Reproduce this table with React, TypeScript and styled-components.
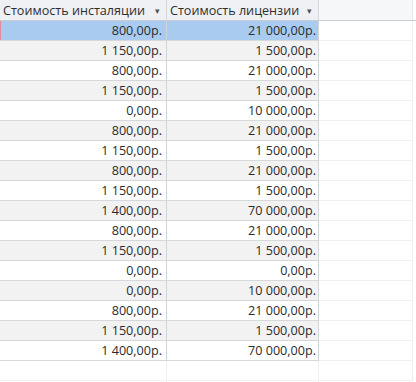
import React from "react";
import styled, { createGlobalStyle } from "styled-components";

type Row = {
  install: string;
  license: string;
};

const rows: Row[] = [
  { install: "800,00р.", license: "21 000,00р." },
  { install: "1 150,00р.", license: "1 500,00р." },
  { install: "800,00р.", license: "21 000,00р." },
  { install: "1 150,00р.", license: "1 500,00р." },
  { install: "0,00р.", license: "10 000,00р." },
  { install: "800,00р.", license: "21 000,00р." },
  { install: "1 150,00р.", license: "1 500,00р." },
  { install: "800,00р.", license: "21 000,00р." },
  { install: "1 150,00р.", license: "1 500,00р." },
  { install: "1 400,00р.", license: "70 000,00р." },
  { install: "800,00р.", license: "21 000,00р." },
  { install: "1 150,00р.", license: "1 500,00р." },
  { install: "0,00р.", license: "0,00р." },
  { install: "0,00р.", license: "10 000,00р." },
  { install: "800,00р.", license: "21 000,00р." },
  { install: "1 150,00р.", license: "1 500,00р." },
  { install: "1 400,00р.", license: "70 000,00р." },
];

const App: React.FC = () => {
  return (
    <>
      <GlobalStyle />
      <Sheet>
        <HeaderRow>
          <HeaderCell>
            Стоимость инсталяции <Arrow>▾</Arrow>
          </HeaderCell>
          <HeaderCell>
            Стоимость лицензии <Arrow>▾</Arrow>
          </HeaderCell>
          <BlankHeader />
        </HeaderRow>
        {rows.map((r, i) => (
          <DataRow key={i}>
            <Cell $selected={i === 0} $shaded={i % 2 === 1} $first>
              {r.install}
            </Cell>
            <Cell $selected={i === 0} $shaded={i % 2 === 1}>
              {r.license}
            </Cell>
            <BlankCell />
          </DataRow>
        ))}
        <DataRow>
          <BlankCell />
          <BlankCell />
          <BlankCell />
        </DataRow>
      </Sheet>
    </>
  );
};

export default App;

const GlobalStyle = createGlobalStyle`
  body {
    margin: 0;
    background: #fff;
    font-family: "Open Sans", "Noto Sans", sans-serif;
    overflow: hidden;
  }
`;

const Sheet = styled.div`
  display: flex;
  flex-direction: column;
  width: 416px;
  height: 382px;
  overflow: hidden;
`;

const HeaderRow = styled.div`
  display: grid;
  grid-template-columns: 167px 152px 94px;
  height: 20px;
  border-bottom: 1px solid #c8cdd4;
`;

const HeaderCell = styled.div`
  display: flex;
  align-items: center;
  justify-content: space-between;
  padding: 0 6px 0 3px;
  background: #eef0f3;
  border-right: 1px solid #d4d8de;
  font-size: 12.6px;
  color: #2e2e2e;
  white-space: nowrap;
`;

const Arrow = styled.span`
  font-size: 9px;
  color: #555;
`;

const BlankHeader = styled.div`
  background: #f6f7f9;
  border-right: 1px solid #e6e8eb;
`;

const DataRow = styled.div`
  display: grid;
  grid-template-columns: 167px 152px 94px;
  height: 20px;
`;

const Cell = styled.div<{ $selected?: boolean; $shaded?: boolean; $first?: boolean }>`
  display: flex;
  align-items: center;
  justify-content: flex-end;
  padding-right: ${(p) => (p.$first ? "4px" : "2px")};
  font-size: 12.6px;
  color: #2b2b2b;
  white-space: nowrap;
  background: ${(p) => (p.$selected ? "#a9cbef" : p.$shaded ? "#f2f2f2" : "#fff")};
  border-bottom: 1px solid #d6d8dc;
  border-right: 1px solid #d0d3d8;
  box-shadow: ${(p) => (p.$first && p.$selected ? "inset 1px 0 0 #e58a9a" : "none")};
`;

const BlankCell = styled.div`
  border-bottom: 1px solid #f0f0f2;
  border-right: 1px solid #eceef0;
`;
